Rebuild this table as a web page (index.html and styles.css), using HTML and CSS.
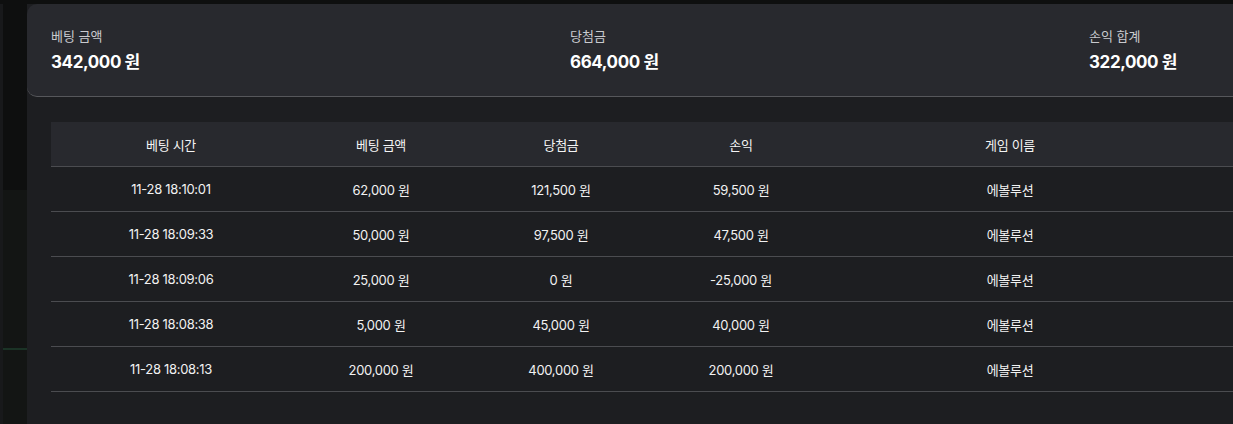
FILE: index.html
```html
<!DOCTYPE html>
<html lang="ko">
<head>
<meta charset="utf-8">
<link rel="stylesheet" href="styles.css">
</head>
<body>
<div class="topbar"></div>
<div class="layout">
  <aside class="side">
    <div class="side-top"></div>
    <div class="side-bottom"><div class="side-line"></div></div>
  </aside>
  <main class="main">
    <section class="summary">
      <div class="stat"><div class="stat-label">베팅 금액</div><div class="stat-value">342,000 원</div></div>
      <div class="stat"><div class="stat-label">당첨금</div><div class="stat-value">664,000 원</div></div>
      <div class="stat"><div class="stat-label">손익 합계</div><div class="stat-value">322,000 원</div></div>
    </section>
    <section class="table">
      <div class="row head">
        <div class="cell">베팅 시간</div><div class="cell">베팅 금액</div><div class="cell">당첨금</div><div class="cell">손익</div><div class="cell">게임 이름</div><div class="cell"></div>
      </div>
      <div class="row">
        <div class="cell">11-28 18:10:01</div><div class="cell">62,000 원</div><div class="cell">121,500 원</div><div class="cell">59,500 원</div><div class="cell">에볼루션</div><div class="cell"></div>
      </div>
      <div class="row">
        <div class="cell">11-28 18:09:33</div><div class="cell">50,000 원</div><div class="cell">97,500 원</div><div class="cell">47,500 원</div><div class="cell">에볼루션</div><div class="cell"></div>
      </div>
      <div class="row">
        <div class="cell">11-28 18:09:06</div><div class="cell">25,000 원</div><div class="cell">0 원</div><div class="cell">-25,000 원</div><div class="cell">에볼루션</div><div class="cell"></div>
      </div>
      <div class="row">
        <div class="cell">11-28 18:08:38</div><div class="cell">5,000 원</div><div class="cell">45,000 원</div><div class="cell">40,000 원</div><div class="cell">에볼루션</div><div class="cell"></div>
      </div>
      <div class="row">
        <div class="cell">11-28 18:08:13</div><div class="cell">200,000 원</div><div class="cell">400,000 원</div><div class="cell">200,000 원</div><div class="cell">에볼루션</div><div class="cell"></div>
      </div>
    </section>
  </main>
</div>
</body>
</html>
```

FILE: styles.css
```css
html, body {
  margin: 0;
  padding: 0;
  width: 1233px;
  height: 424px;
  overflow: hidden;
  background: #0e0f0f;
  font-family: "Inter", "Noto Sans CJK KR", sans-serif;
  color: #f2f2f2;
}

.topbar {
  height: 4px;
  background: #0e0f0f;
}

.layout {
  display: flex;
  height: 420px;
}

.side {
  width: 24px;
  flex: none;
  border-left: 3px solid #18191b;
  display: flex;
  flex-direction: column;
}

.side-top {
  height: 186px;
  background: #0e0f0f;
}

.side-bottom {
  flex: 1;
  background: #131514;
  padding-top: 158px;
}

.side-line {
  height: 2px;
  background: #1b3326;
}

.main {
  flex: 1;
  min-width: 0;
  background: #1d1e21;
}

.summary {
  display: grid;
  grid-template-columns: 519px 519px 1fr;
  padding: 24px 0 22px 24px;
  background: #28292e;
  border-bottom: 1px solid #56575b;
  border-radius: 10px 0 0 10px;
}

.stat-label {
  font-size: 13px;
  line-height: 16px;
  color: #c9cace;
}

.stat-value {
  margin-top: 7px;
  font-size: 17px;
  line-height: 23px;
  font-weight: 700;
  color: #ffffff;
  letter-spacing: -0.4px;
}

.table {
  margin: 25px 0 0 24px;
}

.row {
  display: grid;
  grid-template-columns: 240px 180px 180px 180px 358px 1fr;
  height: 44px;
  align-items: center;
  border-bottom: 1px solid #4b4c50;
  font-size: 13px;
  letter-spacing: -0.3px;
}

.row.head {
  background: #28292e;
  color: #f4f4f4;
}

.cell {
  text-align: center;
}
```
